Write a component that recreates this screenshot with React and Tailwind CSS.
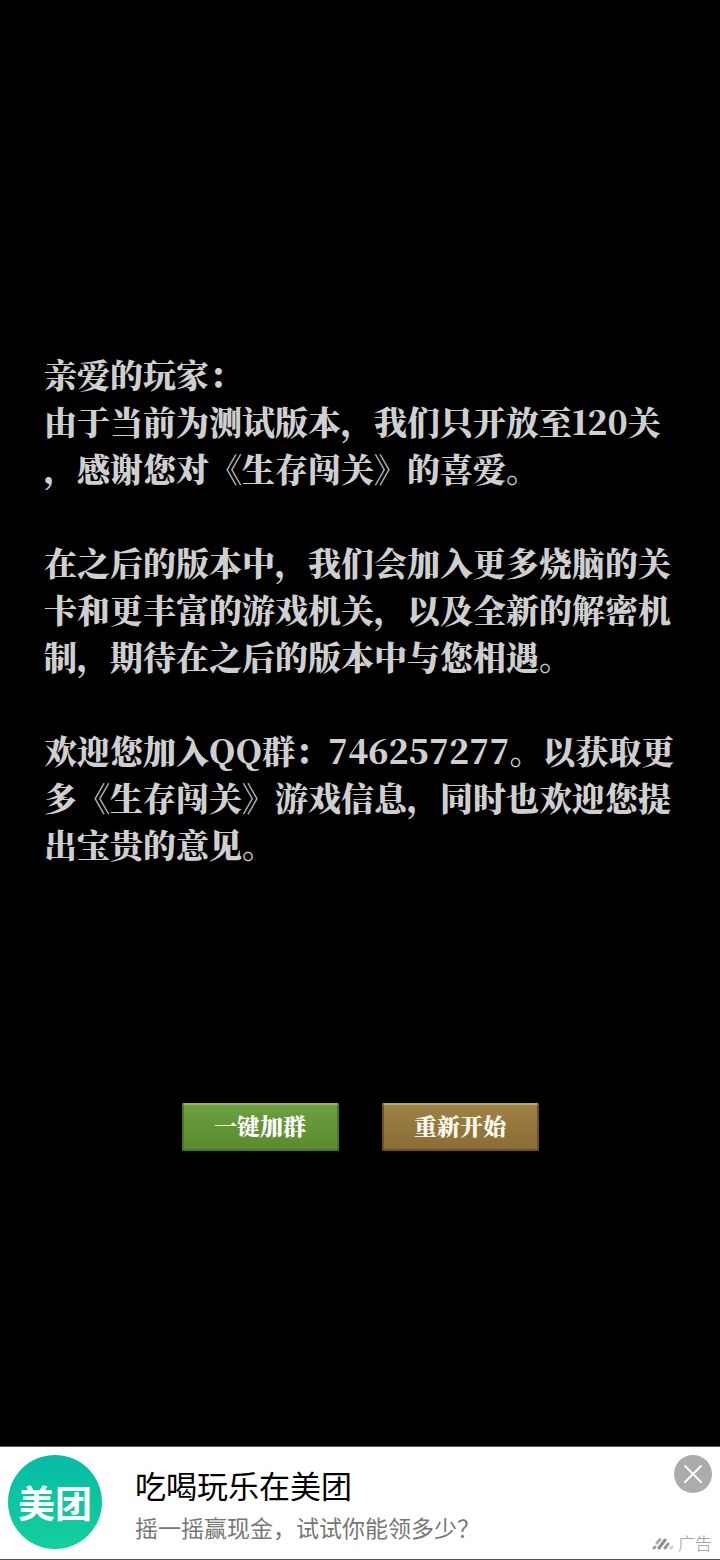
const paragraphs = [
    ['亲爱的玩家：', '由于当前为测试版本，我们只开放至120关', '，感谢您对《生存闯关》的喜爱。'],
    [
        '在之后的版本中，我们会加入更多烧脑的关',
        '卡和更丰富的游戏机关，以及全新的解密机',
        '制，期待在之后的版本中与您相遇。',
    ],
    [
        '欢迎您加入QQ群：746257277。以获取更',
        '多《生存闯关》游戏信息，同时也欢迎您提',
        '出宝贵的意见。',
    ],
];

function Letter() {
    return (
        <div className="flex flex-col gap-[47px] px-11 text-[33px] leading-[47px] font-black whitespace-nowrap text-[#cfcfcf]">
            {paragraphs.map((lines, i) => (
                <p key={i}>
                    {lines.map((line) => (
                        <span key={line} className="block">
                            {line}
                        </span>
                    ))}
                </p>
            ))}
        </div>
    );
}

function MeituanLogo() {
    return (
        <div className="flex size-[94px] shrink-0 items-center justify-center rounded-full bg-linear-to-b from-[#08bba6] to-[#13cf9c] text-[37px] leading-none font-bold text-white">
            美团
        </div>
    );
}

function AdBanner() {
    return (
        <footer className="flex h-[114px] border-y border-[#555] bg-white pl-2 text-black">
            <div className="pt-2">
                <MeituanLogo />
            </div>
            <div className="flex flex-1 flex-col pt-[18px] pl-[33px] whitespace-nowrap">
                <h2 className="text-[31px] leading-10">吃喝玩乐在美团</h2>
                <p className="mt-1 text-[23px] leading-9 text-[#777]">摇一摇赢现金，试试你能领多少？</p>
            </div>
            <div className="flex flex-col items-end justify-between pt-2 pr-2 pb-1">
                <button type="button" aria-label="关闭" className="flex size-[38px] items-center justify-center rounded-full bg-[#ababab]">
                    <svg viewBox="0 0 38 38" className="size-[38px]" fill="none" stroke="#fff" strokeWidth="2" strokeLinecap="round">
                        <path d="M11 11 27 27M27 11 11 27" />
                    </svg>
                </button>
                <div className="flex items-center gap-1 text-[17px] leading-6 font-light text-[#999]">
                    <svg viewBox="0 0 22 13" className="h-[13px] w-[22px]" fill="none" strokeWidth="3" strokeLinecap="round">
                        <path d="M2 11 3 10" stroke="#999" />
                        <path d="M5 6 8 2.500" stroke="#aaa" />
                        <path d="M7 11 13 3" stroke="#8f8f8f" />
                        <path d="M13 11 16 7" stroke="#999" />
                        <path d="M19 11 20 10" stroke="#ccc" />
                    </svg>
                    <span>广告</span>
                </div>
            </div>
        </footer>
    );
}

function App() {
    return (
        <div className="flex min-h-screen flex-col bg-black font-['Noto_Sans_CJK_SC',sans-serif]">
            <main className="flex flex-1 flex-col pt-[350px] font-['Noto_Serif_CJK_SC','Noto_Sans_CJK_SC',serif]">
                <Letter />
                <div className="mt-[236px] flex justify-center gap-[43px]">
                    <button
                        type="button"
                        className="h-12 w-[157px] rounded-xs border-2 border-[#4c7426] border-t-[#9bb565] bg-linear-to-b from-[#6b9f40] to-[#5c8b2c] pb-1 text-[23px] leading-none font-black text-white"
                    >
                        一键加群
                    </button>
                    <button
                        type="button"
                        className="h-12 w-[157px] rounded-xs border-2 border-[#6d5122] border-t-[#bda568] bg-linear-to-b from-[#9d8246] to-[#8b6c35] pb-1 text-[23px] leading-none font-black text-[#fffbee]"
                    >
                        重新开始
                    </button>
                </div>
            </main>
            <AdBanner />
        </div>
    );
}

export default App;
